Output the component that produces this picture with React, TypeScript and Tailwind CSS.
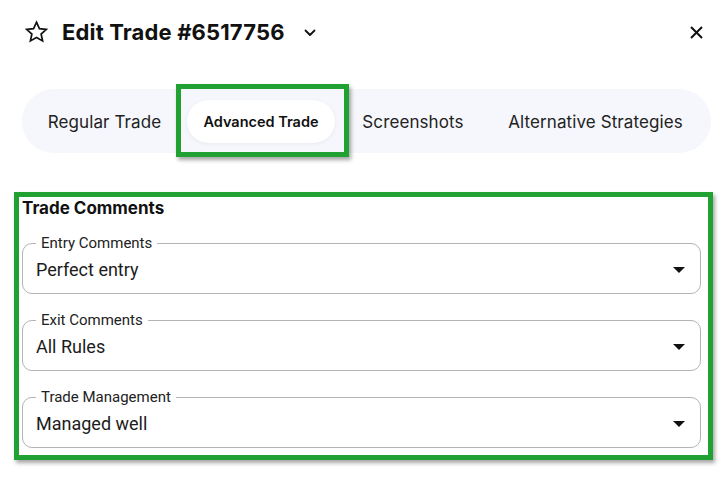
const sans = { fontFamily: 'Inter, "Noto Sans", sans-serif' };
const roboto = { fontFamily: 'Roboto, "Liberation Sans", sans-serif' };

function StarIcon() {
  return (
    <svg width="25" height="24" viewBox="0 0 24 24" fill="none" stroke="#111" strokeWidth="1.7" strokeLinejoin="miter">
      <polygon points="12,2.2 14.9,8.6 21.8,9.3 16.6,14 18.1,20.9 12,17.4 5.9,20.9 7.4,14 2.2,9.3 9.1,8.6" />
    </svg>
  );
}

function Chevron() {
  return (
    <svg width="12" height="8" viewBox="0 0 12 8" fill="none" stroke="#111" strokeWidth="1.8" strokeLinecap="round" strokeLinejoin="round">
      <path d="M1.5 1.5 L6 6 L10.5 1.5" />
    </svg>
  );
}

function CloseIcon() {
  return (
    <svg width="13" height="13" viewBox="0 0 13 13" fill="none" stroke="#111" strokeWidth="2">
      <path d="M1 1 L12 12 M12 1 L1 12" />
    </svg>
  );
}

function Caret() {
  return (
    <svg width="12" height="6" viewBox="0 0 12 6">
      <polygon points="0,0 12,0 6,6" fill="#111" />
    </svg>
  );
}

function SelectField({ label, value }: { label: string; value: string }) {
  return (
    <div className="relative h-[51px] rounded-[10px] border border-[#b4b4b4] flex items-center pl-[13px] pr-[15px]" style={roboto}>
      <span className="absolute -top-[11px] left-[13px] bg-white px-[5px] text-[15px] leading-[20px] text-[#222]">{label}</span>
      <span className="text-[18px] leading-[24px] text-[#1c1c1c] mt-[2px]">{value}</span>
      <span className="ml-auto mt-[2px] flex">
        <Caret />
      </span>
    </div>
  );
}

export default function App() {
  const tabs = [
    { name: 'Regular Trade', w: 'w-[145px]' },
    { name: 'Advanced Trade', w: 'w-[148px]', active: true },
    { name: 'Screenshots', w: 'w-[136px]' },
    { name: 'Alternative Strategies', w: 'w-[209px]' },
  ];

  return (
    <div className="relative w-[722px] h-[479px] bg-white overflow-hidden text-[#111]" style={sans}>
      <div className="flex items-center h-[64px] pl-[24px] pr-[19px]">
        <StarIcon />
        <h1 className="ml-[13px] text-[22px] font-bold tracking-[0.15px] leading-none">Edit Trade #6517756</h1>
        <span className="ml-[19px] mt-[1px] flex">
          <Chevron />
        </span>
        <span className="ml-auto flex">
          <CloseIcon />
        </span>
      </div>

      <div className="mt-[25px] ml-[22px] w-[689px] h-[64px] rounded-full bg-[#f6f7fc] flex items-center pl-[10px] gap-[10px]">
        {tabs.map((t) =>
          t.active ? (
            <div key={t.name} className={`relative ${t.w} h-[43px] mt-[1px] rounded-full bg-white shadow-[0_1px_4px_rgba(0,0,0,0.06)] flex items-center justify-center`}>
              <span className="text-[14.5px] font-semibold text-[#111] mt-[1px]">{t.name}</span>
              <div className="absolute -left-[11px] -top-[16px] -right-[14px] -bottom-[14px] border-[5px] border-[#21a131] shadow-[2px_3px_4px_rgba(0,0,0,0.35)]" />
            </div>
          ) : (
            <div key={t.name} className={`${t.w} h-[43px] flex items-center justify-center`}>
              <span className="text-[17px] text-[#222] mt-[3px] tracking-[0.1px]">{t.name}</span>
            </div>
          )
        )}
      </div>

      <div className="mt-[39px] ml-[14px] w-[699px] h-[268px] border-[5px] border-[#21a131] shadow-[2px_3px_4px_rgba(0,0,0,0.35)] pl-[3px] pr-[7px] pt-[1px]">
        <h2 className="text-[17px] font-bold leading-[20px] text-[#111]">Trade Comments</h2>
        <div className="mt-[25px] flex flex-col gap-[26px]">
          <SelectField label="Entry Comments" value="Perfect entry" />
          <SelectField label="Exit Comments" value="All Rules" />
          <SelectField label="Trade Management" value="Managed well" />
        </div>
      </div>
    </div>
  );
}
